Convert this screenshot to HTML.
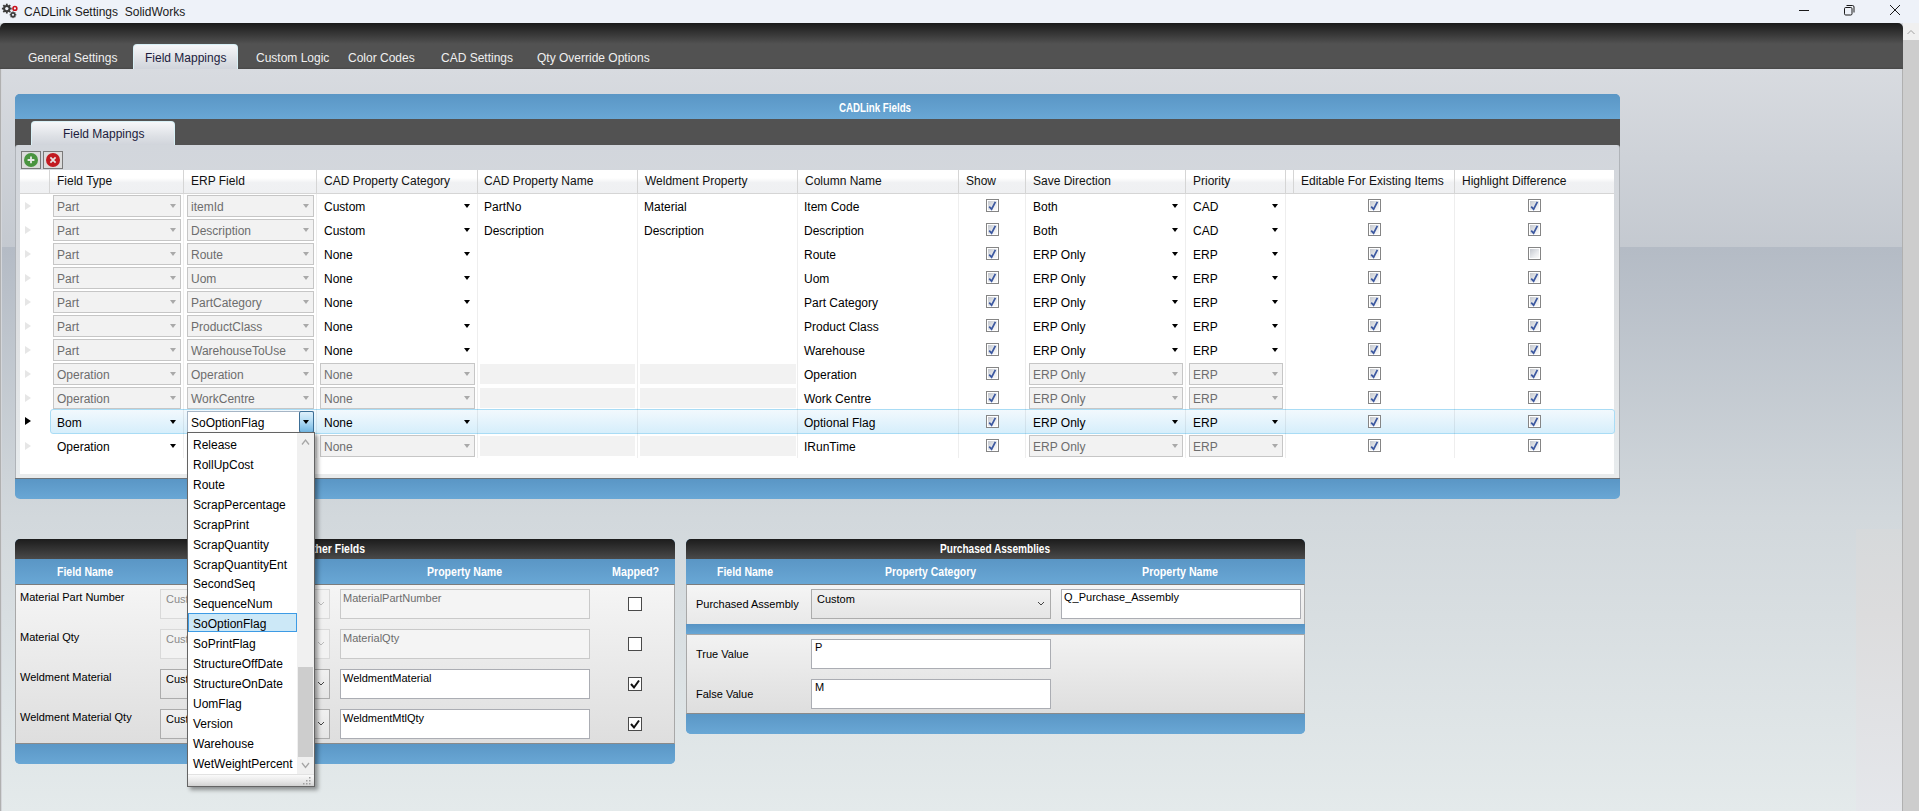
<!DOCTYPE html>
<html><head><meta charset="utf-8"><title>CADLink Settings</title>
<style>
*{box-sizing:border-box;margin:0;padding:0}
html,body{width:1919px;height:811px;overflow:hidden}
body{position:relative;font-family:"Liberation Sans", sans-serif;font-size:12px;color:#000;background:#d5d8dd}
.a{position:absolute}
.t{position:absolute;white-space:nowrap;line-height:1}
.cb{position:absolute;width:13px;height:13px;border:1px solid #858585;background:#fff}
.cbi{position:absolute;left:1px;top:1px;width:9px;height:9px;background:linear-gradient(135deg,#c3c7ce,#e9ebee 60%,#fbfbfb)}
.dcombo{position:absolute;height:22px;border:1px solid #c6c6c6;background:#f2f2f2}
.dbox{position:absolute;height:20px;background:#f2f2f2}
.arr{position:absolute;width:0;height:0;border-left:3.5px solid transparent;border-right:3.5px solid transparent;border-top:4px solid #000}
.darr{position:absolute;width:0;height:0;border-left:3.5px solid transparent;border-right:3.5px solid transparent;border-top:4px solid #a9a9a9}
.hb{color:#fff;font-weight:bold}
</style></head><body>

<div class="a" style="left:0;top:0;width:1919px;height:23px;background:#eef2f9"></div>
<svg class="a" style="left:1px;top:2px" width="20" height="18" viewBox="0 0 20 18">
<g fill="#3c3c3c">
<circle cx="5.8" cy="6.6" r="3.7"/>
<g transform="translate(5.8 6.6)">
<rect x="-0.9" y="-4.9" width="1.8" height="9.8"/>
<rect x="-0.9" y="-4.9" width="1.8" height="9.8" transform="rotate(45)"/>
<rect x="-0.9" y="-4.9" width="1.8" height="9.8" transform="rotate(90)"/>
<rect x="-0.9" y="-4.9" width="1.8" height="9.8" transform="rotate(135)"/>
</g>
<circle cx="12" cy="12.8" r="2.5"/>
<g transform="translate(12 12.8)">
<rect x="-0.7" y="-3.3" width="1.4" height="6.6"/>
<rect x="-0.7" y="-3.3" width="1.4" height="6.6" transform="rotate(45)"/>
<rect x="-0.7" y="-3.3" width="1.4" height="6.6" transform="rotate(90)"/>
<rect x="-0.7" y="-3.3" width="1.4" height="6.6" transform="rotate(135)"/>
</g>
</g>
<circle cx="5.8" cy="6.6" r="1.7" fill="#eef2f9"/>
<circle cx="12" cy="12.8" r="1.1" fill="#eef2f9"/>
<circle cx="13.9" cy="6.4" r="2.7" fill="#c8101a"/>
<circle cx="13.9" cy="6.4" r="1.1" fill="#eef2f9"/>
</svg>
<div class="t" style="left:24px;top:6px;font-size:12px;color:#1a1a1a">CADLink Settings&nbsp; SolidWorks</div>
<svg class="a" style="left:1790px;top:0" width="129" height="23" viewBox="0 0 129 23">
<line x1="9" y1="10.5" x2="19" y2="10.5" stroke="#1a1a1a" stroke-width="1"/>
<rect x="54.5" y="7.5" width="7.5" height="7.5" rx="1.2" fill="none" stroke="#1a1a1a" stroke-width="1"/>
<path d="M56.5 5.5 H62.5 A1.5 1.5 0 0 1 64 7 V12.5" fill="none" stroke="#1a1a1a" stroke-width="1"/>
<line x1="100" y1="5" x2="110" y2="15" stroke="#1a1a1a" stroke-width="1"/>
<line x1="110" y1="5" x2="100" y2="15" stroke="#1a1a1a" stroke-width="1"/>
</svg>
<div class="a" style="left:1903px;top:23px;width:16px;height:788px;background:#cdcdcd"></div>
<div class="a" style="left:1903px;top:23px;width:16px;height:17px;background:#f0f0f0"></div>
<svg class="a" style="left:1903px;top:23px" width="16" height="17"><path d="M4.5 11 L8 7.5 L11.5 11" fill="none" stroke="#a0a0a0" stroke-width="1"/></svg>
<div class="a" style="left:0;top:23px;width:1903px;height:46px;border-radius:5px 5px 0 0;background:linear-gradient(#1a1a1a 0px,#525252 21px,#525252 44px,#474747 46px)"></div>
<div class="t" style="left:28px;top:52px;color:#f0f0f0">General Settings</div>
<div class="t" style="left:256px;top:52px;color:#f0f0f0">Custom Logic</div>
<div class="t" style="left:348px;top:52px;color:#f0f0f0">Color Codes</div>
<div class="t" style="left:441px;top:52px;color:#f0f0f0">CAD Settings</div>
<div class="t" style="left:537px;top:52px;color:#f0f0f0">Qty Override Options</div>
<div class="a" style="left:133px;top:44px;width:105px;height:26px;border:1px solid #d8f0f6;border-bottom:none;border-radius:4px 4px 0 0;background:linear-gradient(#f6f7f9,#dde0e5 60%,#cfd3da)"></div>
<div class="t" style="left:145px;top:52px;color:#1c1c3c">Field Mappings</div>
<div class="a" style="left:0;top:69px;width:1903px;height:178px;background:linear-gradient(#d8dbe0,#c4c9d0)"></div>
<div class="a" style="left:0;top:247px;width:1903px;height:564px;background:linear-gradient(#b4bbc5 0%,#d2d8dc 48%,#e4eaeb 100%)"></div>
<div class="a" style="left:1856px;top:529px;width:46px;height:282px;background:linear-gradient(#d6d9db,#dcdcdd 30%,#e5e7eb)"></div>
<div class="a" style="left:0;top:69px;width:1px;height:742px;background:#b0b0b0"></div><div class="a" style="left:1px;top:69px;width:1px;height:742px;background:#d4d6da"></div>
<div class="a" style="left:1902px;top:69px;width:1px;height:742px;background:#b0b0b0"></div>
<div class="a" style="left:15px;top:94px;width:1605px;height:404px;border-radius:5px;background:linear-gradient(#5a96c5,#69a7d5)"></div>
<div class="a" style="left:15px;top:94px;width:1605px;height:25px;border-radius:5px 5px 0 0;background:linear-gradient(#5a96c5,#69a7d5)"></div>
<div class="t" style="left:839px;top:102px;font-size:12px;font-weight:bold;color:#fff;transform:scaleX(0.8121);transform-origin:0 0;">CADLink Fields</div>
<div class="a" style="left:15px;top:119px;width:1605px;height:29px;background:#525252"></div>
<div class="a" style="left:31px;top:121px;width:144px;height:25px;border:1px solid #d8f0f6;border-bottom:none;border-radius:4px 4px 0 0;background:linear-gradient(#f6f7f9,#dde0e5 60%,#cfd3da)"></div>
<div class="t" style="left:63px;top:128px;color:#1c1c3c">Field Mappings</div>
<div class="a" style="left:15px;top:145px;width:1605px;height:333px;border-radius:3px 3px 0 0;background:linear-gradient(#d2d6dc 0%,#d6d9dd 30%,#dfe1e3 60%,#e8ecee 100%);border-left:1px solid #b0b4b9;border-right:1px solid #b0b4b9"></div>
<div class="a" style="left:16px;top:474px;width:1603px;height:4px;background:#e9ebec"></div>
<div class="a" style="left:15px;top:478px;width:1605px;height:21px;border-radius:0 0 5px 5px;background:linear-gradient(#5a96c5,#69a7d5);border-top:1px solid #6e747a"></div>
<div class="a" style="left:21px;top:151px;width:20px;height:18px;border:1px solid #7a7a7a;background:#dcdcdc"></div>
<svg class="a" style="left:21px;top:151px" width="20" height="18"><circle cx="10" cy="9" r="7" fill="#4a9440"/><path d="M10 5.5 V12.3 M6.6 9 H13.4" stroke="#e9e9e9" stroke-width="1.8"/></svg>
<div class="a" style="left:43px;top:151px;width:20px;height:18px;border:1px solid #7a7a7a;background:#dcdcdc"></div>
<svg class="a" style="left:43px;top:151px" width="20" height="18"><circle cx="10" cy="9" r="7" fill="#c21a20"/><path d="M7.4 6.4 L12.6 11.6 M12.6 6.4 L7.4 11.6" stroke="#e6e6e6" stroke-width="1.7"/></svg>
<div class="a" style="left:20px;top:170px;width:1594px;height:304px;background:#fff"></div>
<div class="a" style="left:20px;top:170px;width:1594px;height:24px;background:linear-gradient(#ffffff 0%,#ffffff 35%,#f0f1f3 55%,#eff0f2 100%);border-bottom:1px solid #d5d5d5"></div>
<div class="a" style="left:49px;top:170px;width:1px;height:23px;background:#d5d5d5"></div>
<div class="a" style="left:183px;top:170px;width:1px;height:23px;background:#d5d5d5"></div>
<div class="a" style="left:316px;top:170px;width:1px;height:23px;background:#d5d5d5"></div>
<div class="a" style="left:477px;top:170px;width:1px;height:23px;background:#d5d5d5"></div>
<div class="a" style="left:637px;top:170px;width:1px;height:23px;background:#d5d5d5"></div>
<div class="a" style="left:797px;top:170px;width:1px;height:23px;background:#d5d5d5"></div>
<div class="a" style="left:958px;top:170px;width:1px;height:23px;background:#d5d5d5"></div>
<div class="a" style="left:1025px;top:170px;width:1px;height:23px;background:#d5d5d5"></div>
<div class="a" style="left:1185px;top:170px;width:1px;height:23px;background:#d5d5d5"></div>
<div class="a" style="left:1285px;top:170px;width:1px;height:23px;background:#d5d5d5"></div>
<div class="a" style="left:1293px;top:170px;width:1px;height:23px;background:#d5d5d5"></div>
<div class="a" style="left:1454px;top:170px;width:1px;height:23px;background:#d5d5d5"></div>
<div class="t" style="left:57px;top:175px;color:#111">Field Type</div>
<div class="t" style="left:191px;top:175px;color:#111">ERP Field</div>
<div class="t" style="left:324px;top:175px;color:#111">CAD Property Category</div>
<div class="t" style="left:484px;top:175px;color:#111">CAD Property Name</div>
<div class="t" style="left:645px;top:175px;color:#111">Weldment Property</div>
<div class="t" style="left:805px;top:175px;color:#111">Column Name</div>
<div class="t" style="left:966px;top:175px;color:#111">Show</div>
<div class="t" style="left:1033px;top:175px;color:#111">Save Direction</div>
<div class="t" style="left:1193px;top:175px;color:#111">Priority</div>
<div class="t" style="left:1301px;top:175px;color:#111">Editable For Existing Items</div>
<div class="t" style="left:1462px;top:175px;color:#111">Highlight Difference</div>
<div class="a" style="left:50px;top:409px;width:1565px;height:25px;border:1px solid #a9dcf5;border-radius:3px;background:linear-gradient(#f2f9fd,#d6eefb)"></div>
<div class="a" style="left:183px;top:194px;width:1px;height:264px;background:rgba(0,0,0,0.065)"></div>
<div class="a" style="left:316px;top:194px;width:1px;height:264px;background:rgba(0,0,0,0.065)"></div>
<div class="a" style="left:477px;top:194px;width:1px;height:264px;background:rgba(0,0,0,0.065)"></div>
<div class="a" style="left:637px;top:194px;width:1px;height:264px;background:rgba(0,0,0,0.065)"></div>
<div class="a" style="left:797px;top:194px;width:1px;height:264px;background:rgba(0,0,0,0.065)"></div>
<div class="a" style="left:958px;top:194px;width:1px;height:264px;background:rgba(0,0,0,0.065)"></div>
<div class="a" style="left:1025px;top:194px;width:1px;height:264px;background:rgba(0,0,0,0.065)"></div>
<div class="a" style="left:1185px;top:194px;width:1px;height:264px;background:rgba(0,0,0,0.065)"></div>
<div class="a" style="left:1285px;top:194px;width:1px;height:264px;background:rgba(0,0,0,0.065)"></div>
<div class="a" style="left:1454px;top:194px;width:1px;height:264px;background:rgba(0,0,0,0.065)"></div>
<div class="a" style="left:25px;top:202px;width:0;height:0;border-top:4.5px solid transparent;border-bottom:4.5px solid transparent;border-left:6px solid #e6e6e6"></div>
<div class="dcombo" style="left:53px;top:195px;width:128px"></div><div class="t" style="left:57px;top:201px;color:#6d6d6d">Part</div><div class="darr" style="left:170px;top:204px"></div>
<div class="dcombo" style="left:187px;top:195px;width:127px"></div><div class="t" style="left:191px;top:201px;color:#6d6d6d">itemId</div><div class="darr" style="left:303px;top:204px"></div>
<div class="t" style="left:324px;top:201px;color:#000">Custom</div><div class="arr" style="left:464px;top:204px"></div>
<div class="t" style="left:484px;top:201px">PartNo</div>
<div class="t" style="left:644px;top:201px">Material</div>
<div class="t" style="left:804px;top:201px">Item Code</div>
<div class="cb" style="left:986px;top:199px"><div class="cbi"></div><svg class="a" style="left:0;top:0" width="11" height="11"><path d="M2.2 6.6 L4.6 9.2 L8.4 1.8" fill="none" stroke="#3c58a0" stroke-width="1.7"/></svg></div>
<div class="t" style="left:1033px;top:201px;color:#000">Both</div><div class="arr" style="left:1172px;top:204px"></div>
<div class="t" style="left:1193px;top:201px;color:#000">CAD</div><div class="arr" style="left:1272px;top:204px"></div>
<div class="cb" style="left:1368px;top:199px"><div class="cbi"></div><svg class="a" style="left:0;top:0" width="11" height="11"><path d="M2.2 6.6 L4.6 9.2 L8.4 1.8" fill="none" stroke="#3c58a0" stroke-width="1.7"/></svg></div>
<div class="cb" style="left:1528px;top:199px"><div class="cbi"></div><svg class="a" style="left:0;top:0" width="11" height="11"><path d="M2.2 6.6 L4.6 9.2 L8.4 1.8" fill="none" stroke="#3c58a0" stroke-width="1.7"/></svg></div>
<div class="a" style="left:25px;top:226px;width:0;height:0;border-top:4.5px solid transparent;border-bottom:4.5px solid transparent;border-left:6px solid #e6e6e6"></div>
<div class="dcombo" style="left:53px;top:219px;width:128px"></div><div class="t" style="left:57px;top:225px;color:#6d6d6d">Part</div><div class="darr" style="left:170px;top:228px"></div>
<div class="dcombo" style="left:187px;top:219px;width:127px"></div><div class="t" style="left:191px;top:225px;color:#6d6d6d">Description</div><div class="darr" style="left:303px;top:228px"></div>
<div class="t" style="left:324px;top:225px;color:#000">Custom</div><div class="arr" style="left:464px;top:228px"></div>
<div class="t" style="left:484px;top:225px">Description</div>
<div class="t" style="left:644px;top:225px">Description</div>
<div class="t" style="left:804px;top:225px">Description</div>
<div class="cb" style="left:986px;top:223px"><div class="cbi"></div><svg class="a" style="left:0;top:0" width="11" height="11"><path d="M2.2 6.6 L4.6 9.2 L8.4 1.8" fill="none" stroke="#3c58a0" stroke-width="1.7"/></svg></div>
<div class="t" style="left:1033px;top:225px;color:#000">Both</div><div class="arr" style="left:1172px;top:228px"></div>
<div class="t" style="left:1193px;top:225px;color:#000">CAD</div><div class="arr" style="left:1272px;top:228px"></div>
<div class="cb" style="left:1368px;top:223px"><div class="cbi"></div><svg class="a" style="left:0;top:0" width="11" height="11"><path d="M2.2 6.6 L4.6 9.2 L8.4 1.8" fill="none" stroke="#3c58a0" stroke-width="1.7"/></svg></div>
<div class="cb" style="left:1528px;top:223px"><div class="cbi"></div><svg class="a" style="left:0;top:0" width="11" height="11"><path d="M2.2 6.6 L4.6 9.2 L8.4 1.8" fill="none" stroke="#3c58a0" stroke-width="1.7"/></svg></div>
<div class="a" style="left:25px;top:250px;width:0;height:0;border-top:4.5px solid transparent;border-bottom:4.5px solid transparent;border-left:6px solid #e6e6e6"></div>
<div class="dcombo" style="left:53px;top:243px;width:128px"></div><div class="t" style="left:57px;top:249px;color:#6d6d6d">Part</div><div class="darr" style="left:170px;top:252px"></div>
<div class="dcombo" style="left:187px;top:243px;width:127px"></div><div class="t" style="left:191px;top:249px;color:#6d6d6d">Route</div><div class="darr" style="left:303px;top:252px"></div>
<div class="t" style="left:324px;top:249px;color:#000">None</div><div class="arr" style="left:464px;top:252px"></div>
<div class="t" style="left:804px;top:249px">Route</div>
<div class="cb" style="left:986px;top:247px"><div class="cbi"></div><svg class="a" style="left:0;top:0" width="11" height="11"><path d="M2.2 6.6 L4.6 9.2 L8.4 1.8" fill="none" stroke="#3c58a0" stroke-width="1.7"/></svg></div>
<div class="t" style="left:1033px;top:249px;color:#000">ERP Only</div><div class="arr" style="left:1172px;top:252px"></div>
<div class="t" style="left:1193px;top:249px;color:#000">ERP</div><div class="arr" style="left:1272px;top:252px"></div>
<div class="cb" style="left:1368px;top:247px"><div class="cbi"></div><svg class="a" style="left:0;top:0" width="11" height="11"><path d="M2.2 6.6 L4.6 9.2 L8.4 1.8" fill="none" stroke="#3c58a0" stroke-width="1.7"/></svg></div>
<div class="cb" style="left:1528px;top:247px"><div class="cbi"></div></div>
<div class="a" style="left:25px;top:274px;width:0;height:0;border-top:4.5px solid transparent;border-bottom:4.5px solid transparent;border-left:6px solid #e6e6e6"></div>
<div class="dcombo" style="left:53px;top:267px;width:128px"></div><div class="t" style="left:57px;top:273px;color:#6d6d6d">Part</div><div class="darr" style="left:170px;top:276px"></div>
<div class="dcombo" style="left:187px;top:267px;width:127px"></div><div class="t" style="left:191px;top:273px;color:#6d6d6d">Uom</div><div class="darr" style="left:303px;top:276px"></div>
<div class="t" style="left:324px;top:273px;color:#000">None</div><div class="arr" style="left:464px;top:276px"></div>
<div class="t" style="left:804px;top:273px">Uom</div>
<div class="cb" style="left:986px;top:271px"><div class="cbi"></div><svg class="a" style="left:0;top:0" width="11" height="11"><path d="M2.2 6.6 L4.6 9.2 L8.4 1.8" fill="none" stroke="#3c58a0" stroke-width="1.7"/></svg></div>
<div class="t" style="left:1033px;top:273px;color:#000">ERP Only</div><div class="arr" style="left:1172px;top:276px"></div>
<div class="t" style="left:1193px;top:273px;color:#000">ERP</div><div class="arr" style="left:1272px;top:276px"></div>
<div class="cb" style="left:1368px;top:271px"><div class="cbi"></div><svg class="a" style="left:0;top:0" width="11" height="11"><path d="M2.2 6.6 L4.6 9.2 L8.4 1.8" fill="none" stroke="#3c58a0" stroke-width="1.7"/></svg></div>
<div class="cb" style="left:1528px;top:271px"><div class="cbi"></div><svg class="a" style="left:0;top:0" width="11" height="11"><path d="M2.2 6.6 L4.6 9.2 L8.4 1.8" fill="none" stroke="#3c58a0" stroke-width="1.7"/></svg></div>
<div class="a" style="left:25px;top:298px;width:0;height:0;border-top:4.5px solid transparent;border-bottom:4.5px solid transparent;border-left:6px solid #e6e6e6"></div>
<div class="dcombo" style="left:53px;top:291px;width:128px"></div><div class="t" style="left:57px;top:297px;color:#6d6d6d">Part</div><div class="darr" style="left:170px;top:300px"></div>
<div class="dcombo" style="left:187px;top:291px;width:127px"></div><div class="t" style="left:191px;top:297px;color:#6d6d6d">PartCategory</div><div class="darr" style="left:303px;top:300px"></div>
<div class="t" style="left:324px;top:297px;color:#000">None</div><div class="arr" style="left:464px;top:300px"></div>
<div class="t" style="left:804px;top:297px">Part Category</div>
<div class="cb" style="left:986px;top:295px"><div class="cbi"></div><svg class="a" style="left:0;top:0" width="11" height="11"><path d="M2.2 6.6 L4.6 9.2 L8.4 1.8" fill="none" stroke="#3c58a0" stroke-width="1.7"/></svg></div>
<div class="t" style="left:1033px;top:297px;color:#000">ERP Only</div><div class="arr" style="left:1172px;top:300px"></div>
<div class="t" style="left:1193px;top:297px;color:#000">ERP</div><div class="arr" style="left:1272px;top:300px"></div>
<div class="cb" style="left:1368px;top:295px"><div class="cbi"></div><svg class="a" style="left:0;top:0" width="11" height="11"><path d="M2.2 6.6 L4.6 9.2 L8.4 1.8" fill="none" stroke="#3c58a0" stroke-width="1.7"/></svg></div>
<div class="cb" style="left:1528px;top:295px"><div class="cbi"></div><svg class="a" style="left:0;top:0" width="11" height="11"><path d="M2.2 6.6 L4.6 9.2 L8.4 1.8" fill="none" stroke="#3c58a0" stroke-width="1.7"/></svg></div>
<div class="a" style="left:25px;top:322px;width:0;height:0;border-top:4.5px solid transparent;border-bottom:4.5px solid transparent;border-left:6px solid #e6e6e6"></div>
<div class="dcombo" style="left:53px;top:315px;width:128px"></div><div class="t" style="left:57px;top:321px;color:#6d6d6d">Part</div><div class="darr" style="left:170px;top:324px"></div>
<div class="dcombo" style="left:187px;top:315px;width:127px"></div><div class="t" style="left:191px;top:321px;color:#6d6d6d">ProductClass</div><div class="darr" style="left:303px;top:324px"></div>
<div class="t" style="left:324px;top:321px;color:#000">None</div><div class="arr" style="left:464px;top:324px"></div>
<div class="t" style="left:804px;top:321px">Product Class</div>
<div class="cb" style="left:986px;top:319px"><div class="cbi"></div><svg class="a" style="left:0;top:0" width="11" height="11"><path d="M2.2 6.6 L4.6 9.2 L8.4 1.8" fill="none" stroke="#3c58a0" stroke-width="1.7"/></svg></div>
<div class="t" style="left:1033px;top:321px;color:#000">ERP Only</div><div class="arr" style="left:1172px;top:324px"></div>
<div class="t" style="left:1193px;top:321px;color:#000">ERP</div><div class="arr" style="left:1272px;top:324px"></div>
<div class="cb" style="left:1368px;top:319px"><div class="cbi"></div><svg class="a" style="left:0;top:0" width="11" height="11"><path d="M2.2 6.6 L4.6 9.2 L8.4 1.8" fill="none" stroke="#3c58a0" stroke-width="1.7"/></svg></div>
<div class="cb" style="left:1528px;top:319px"><div class="cbi"></div><svg class="a" style="left:0;top:0" width="11" height="11"><path d="M2.2 6.6 L4.6 9.2 L8.4 1.8" fill="none" stroke="#3c58a0" stroke-width="1.7"/></svg></div>
<div class="a" style="left:25px;top:346px;width:0;height:0;border-top:4.5px solid transparent;border-bottom:4.5px solid transparent;border-left:6px solid #e6e6e6"></div>
<div class="dcombo" style="left:53px;top:339px;width:128px"></div><div class="t" style="left:57px;top:345px;color:#6d6d6d">Part</div><div class="darr" style="left:170px;top:348px"></div>
<div class="dcombo" style="left:187px;top:339px;width:127px"></div><div class="t" style="left:191px;top:345px;color:#6d6d6d">WarehouseToUse</div><div class="darr" style="left:303px;top:348px"></div>
<div class="t" style="left:324px;top:345px;color:#000">None</div><div class="arr" style="left:464px;top:348px"></div>
<div class="t" style="left:804px;top:345px">Warehouse</div>
<div class="cb" style="left:986px;top:343px"><div class="cbi"></div><svg class="a" style="left:0;top:0" width="11" height="11"><path d="M2.2 6.6 L4.6 9.2 L8.4 1.8" fill="none" stroke="#3c58a0" stroke-width="1.7"/></svg></div>
<div class="t" style="left:1033px;top:345px;color:#000">ERP Only</div><div class="arr" style="left:1172px;top:348px"></div>
<div class="t" style="left:1193px;top:345px;color:#000">ERP</div><div class="arr" style="left:1272px;top:348px"></div>
<div class="cb" style="left:1368px;top:343px"><div class="cbi"></div><svg class="a" style="left:0;top:0" width="11" height="11"><path d="M2.2 6.6 L4.6 9.2 L8.4 1.8" fill="none" stroke="#3c58a0" stroke-width="1.7"/></svg></div>
<div class="cb" style="left:1528px;top:343px"><div class="cbi"></div><svg class="a" style="left:0;top:0" width="11" height="11"><path d="M2.2 6.6 L4.6 9.2 L8.4 1.8" fill="none" stroke="#3c58a0" stroke-width="1.7"/></svg></div>
<div class="a" style="left:25px;top:370px;width:0;height:0;border-top:4.5px solid transparent;border-bottom:4.5px solid transparent;border-left:6px solid #e6e6e6"></div>
<div class="dcombo" style="left:53px;top:363px;width:128px"></div><div class="t" style="left:57px;top:369px;color:#6d6d6d">Operation</div><div class="darr" style="left:170px;top:372px"></div>
<div class="dcombo" style="left:187px;top:363px;width:127px"></div><div class="t" style="left:191px;top:369px;color:#6d6d6d">Operation</div><div class="darr" style="left:303px;top:372px"></div>
<div class="dcombo" style="left:320px;top:363px;width:155px"></div><div class="t" style="left:324px;top:369px;color:#6d6d6d">None</div><div class="darr" style="left:464px;top:372px"></div>
<div class="dbox" style="left:480px;top:364px;width:155px"></div>
<div class="dbox" style="left:640px;top:364px;width:156px"></div>
<div class="t" style="left:804px;top:369px">Operation</div>
<div class="cb" style="left:986px;top:367px"><div class="cbi"></div><svg class="a" style="left:0;top:0" width="11" height="11"><path d="M2.2 6.6 L4.6 9.2 L8.4 1.8" fill="none" stroke="#3c58a0" stroke-width="1.7"/></svg></div>
<div class="dcombo" style="left:1029px;top:363px;width:154px"></div><div class="t" style="left:1033px;top:369px;color:#6d6d6d">ERP Only</div><div class="darr" style="left:1172px;top:372px"></div>
<div class="dcombo" style="left:1189px;top:363px;width:94px"></div><div class="t" style="left:1193px;top:369px;color:#6d6d6d">ERP</div><div class="darr" style="left:1272px;top:372px"></div>
<div class="cb" style="left:1368px;top:367px"><div class="cbi"></div><svg class="a" style="left:0;top:0" width="11" height="11"><path d="M2.2 6.6 L4.6 9.2 L8.4 1.8" fill="none" stroke="#3c58a0" stroke-width="1.7"/></svg></div>
<div class="cb" style="left:1528px;top:367px"><div class="cbi"></div><svg class="a" style="left:0;top:0" width="11" height="11"><path d="M2.2 6.6 L4.6 9.2 L8.4 1.8" fill="none" stroke="#3c58a0" stroke-width="1.7"/></svg></div>
<div class="a" style="left:25px;top:394px;width:0;height:0;border-top:4.5px solid transparent;border-bottom:4.5px solid transparent;border-left:6px solid #e6e6e6"></div>
<div class="dcombo" style="left:53px;top:387px;width:128px"></div><div class="t" style="left:57px;top:393px;color:#6d6d6d">Operation</div><div class="darr" style="left:170px;top:396px"></div>
<div class="dcombo" style="left:187px;top:387px;width:127px"></div><div class="t" style="left:191px;top:393px;color:#6d6d6d">WorkCentre</div><div class="darr" style="left:303px;top:396px"></div>
<div class="dcombo" style="left:320px;top:387px;width:155px"></div><div class="t" style="left:324px;top:393px;color:#6d6d6d">None</div><div class="darr" style="left:464px;top:396px"></div>
<div class="dbox" style="left:480px;top:388px;width:155px"></div>
<div class="dbox" style="left:640px;top:388px;width:156px"></div>
<div class="t" style="left:804px;top:393px">Work Centre</div>
<div class="cb" style="left:986px;top:391px"><div class="cbi"></div><svg class="a" style="left:0;top:0" width="11" height="11"><path d="M2.2 6.6 L4.6 9.2 L8.4 1.8" fill="none" stroke="#3c58a0" stroke-width="1.7"/></svg></div>
<div class="dcombo" style="left:1029px;top:387px;width:154px"></div><div class="t" style="left:1033px;top:393px;color:#6d6d6d">ERP Only</div><div class="darr" style="left:1172px;top:396px"></div>
<div class="dcombo" style="left:1189px;top:387px;width:94px"></div><div class="t" style="left:1193px;top:393px;color:#6d6d6d">ERP</div><div class="darr" style="left:1272px;top:396px"></div>
<div class="cb" style="left:1368px;top:391px"><div class="cbi"></div><svg class="a" style="left:0;top:0" width="11" height="11"><path d="M2.2 6.6 L4.6 9.2 L8.4 1.8" fill="none" stroke="#3c58a0" stroke-width="1.7"/></svg></div>
<div class="cb" style="left:1528px;top:391px"><div class="cbi"></div><svg class="a" style="left:0;top:0" width="11" height="11"><path d="M2.2 6.6 L4.6 9.2 L8.4 1.8" fill="none" stroke="#3c58a0" stroke-width="1.7"/></svg></div>
<div class="a" style="left:25px;top:417px;width:0;height:0;border-top:4.5px solid transparent;border-bottom:4.5px solid transparent;border-left:6px solid #000"></div>
<div class="t" style="left:57px;top:417px;color:#000">Bom</div><div class="arr" style="left:170px;top:420px"></div>
<div class="a" style="left:187px;top:411px;width:127px;height:22px;border:1px solid #a6b5c5;background:#fff"></div>
<div class="a" style="left:299px;top:411px;width:15px;height:22px;border:1px solid #3c6e96;border-radius:2px;background:linear-gradient(#dff0fb,#b4dcf4 45%,#72b6e2)"></div>
<div class="arr" style="left:303px;top:420px"></div>
<div class="t" style="left:191px;top:417px;color:#000">SoOptionFlag</div>
<div class="t" style="left:324px;top:417px;color:#000">None</div><div class="arr" style="left:464px;top:420px"></div>
<div class="t" style="left:804px;top:417px">Optional Flag</div>
<div class="cb" style="left:986px;top:415px"><div class="cbi"></div><svg class="a" style="left:0;top:0" width="11" height="11"><path d="M2.2 6.6 L4.6 9.2 L8.4 1.8" fill="none" stroke="#3c58a0" stroke-width="1.7"/></svg></div>
<div class="t" style="left:1033px;top:417px;color:#000">ERP Only</div><div class="arr" style="left:1172px;top:420px"></div>
<div class="t" style="left:1193px;top:417px;color:#000">ERP</div><div class="arr" style="left:1272px;top:420px"></div>
<div class="cb" style="left:1368px;top:415px"><div class="cbi"></div><svg class="a" style="left:0;top:0" width="11" height="11"><path d="M2.2 6.6 L4.6 9.2 L8.4 1.8" fill="none" stroke="#3c58a0" stroke-width="1.7"/></svg></div>
<div class="cb" style="left:1528px;top:415px"><div class="cbi"></div><svg class="a" style="left:0;top:0" width="11" height="11"><path d="M2.2 6.6 L4.6 9.2 L8.4 1.8" fill="none" stroke="#3c58a0" stroke-width="1.7"/></svg></div>
<div class="a" style="left:25px;top:442px;width:0;height:0;border-top:4.5px solid transparent;border-bottom:4.5px solid transparent;border-left:6px solid #e6e6e6"></div>
<div class="t" style="left:57px;top:441px;color:#000">Operation</div><div class="arr" style="left:170px;top:444px"></div>
<div class="dcombo" style="left:320px;top:435px;width:155px"></div><div class="t" style="left:324px;top:441px;color:#6d6d6d">None</div><div class="darr" style="left:464px;top:444px"></div>
<div class="dbox" style="left:480px;top:436px;width:155px"></div>
<div class="dbox" style="left:640px;top:436px;width:156px"></div>
<div class="t" style="left:804px;top:441px">IRunTime</div>
<div class="cb" style="left:986px;top:439px"><div class="cbi"></div><svg class="a" style="left:0;top:0" width="11" height="11"><path d="M2.2 6.6 L4.6 9.2 L8.4 1.8" fill="none" stroke="#3c58a0" stroke-width="1.7"/></svg></div>
<div class="dcombo" style="left:1029px;top:435px;width:154px"></div><div class="t" style="left:1033px;top:441px;color:#6d6d6d">ERP Only</div><div class="darr" style="left:1172px;top:444px"></div>
<div class="dcombo" style="left:1189px;top:435px;width:94px"></div><div class="t" style="left:1193px;top:441px;color:#6d6d6d">ERP</div><div class="darr" style="left:1272px;top:444px"></div>
<div class="cb" style="left:1368px;top:439px"><div class="cbi"></div><svg class="a" style="left:0;top:0" width="11" height="11"><path d="M2.2 6.6 L4.6 9.2 L8.4 1.8" fill="none" stroke="#3c58a0" stroke-width="1.7"/></svg></div>
<div class="cb" style="left:1528px;top:439px"><div class="cbi"></div><svg class="a" style="left:0;top:0" width="11" height="11"><path d="M2.2 6.6 L4.6 9.2 L8.4 1.8" fill="none" stroke="#3c58a0" stroke-width="1.7"/></svg></div>
<div class="a" style="left:15px;top:539px;width:660px;height:225px;border-radius:5px;background:linear-gradient(#5a96c5,#69a7d5)"></div>
<div class="a" style="left:15px;top:539px;width:660px;height:20px;border-radius:5px 5px 0 0;background:linear-gradient(#1c1c1c,#4a4a4a)"></div>
<div class="a" style="left:15px;top:559px;width:660px;height:25px;background:linear-gradient(#5a96c5,#69a7d5)"></div>
<div class="a" style="left:15px;top:743px;width:660px;height:21px;border-radius:0 0 5px 5px;background:linear-gradient(#5a96c5,#69a7d5)"></div>
<div class="a" style="left:15px;top:584px;width:660px;height:160px;background:linear-gradient(#f5f5f5,#dedede);border:1px solid #a8a8a8;border-top:1px solid #7c7c7c;border-bottom:1px solid #8a8a8a"></div>
<div class="t" style="left:304px;top:543px;font-size:12px;font-weight:bold;color:#fff;transform:scaleX(0.8716);transform-origin:0 0;">Other Fields</div>
<div class="t" style="left:57px;top:566px;font-size:12px;font-weight:bold;color:#fff;transform:scaleX(0.8750);transform-origin:0 0;">Field Name</div>
<div class="t" style="left:427px;top:566px;font-size:12px;font-weight:bold;color:#fff;transform:scaleX(0.8786);transform-origin:0 0;">Property Name</div>
<div class="t" style="left:612px;top:566px;font-size:12px;font-weight:bold;color:#fff;transform:scaleX(0.8926);transform-origin:0 0;">Mapped?</div>
<div class="t" style="left:20px;top:592px;font-size:11px">Material Part Number</div>
<div class="a" style="left:160px;top:589px;width:170px;height:30px;border:1px solid #d9d9d9;background:#f2f2f2"></div>
<div class="t" style="left:166px;top:594px;font-size:11px;color:#8a8a8a">Custom</div>
<svg class="a" style="left:317px;top:601px" width="8" height="5"><path d="M1 1 L4 4 L7 1" fill="none" stroke="#bbb" stroke-width="1"/></svg>
<div class="a" style="left:340px;top:589px;width:250px;height:30px;border:1px solid #c9c9c9;background:#f4f4f4"></div>
<div class="t" style="left:343px;top:593px;font-size:11px;color:#6d6d6d">MaterialPartNumber</div>
<div class="a" style="left:628px;top:597px;width:14px;height:14px;border:1px solid #4a4a4a;background:#fff"></div>
<div class="t" style="left:20px;top:632px;font-size:11px">Material Qty</div>
<div class="a" style="left:160px;top:629px;width:170px;height:30px;border:1px solid #d9d9d9;background:#f2f2f2"></div>
<div class="t" style="left:166px;top:634px;font-size:11px;color:#8a8a8a">Custom</div>
<svg class="a" style="left:317px;top:641px" width="8" height="5"><path d="M1 1 L4 4 L7 1" fill="none" stroke="#bbb" stroke-width="1"/></svg>
<div class="a" style="left:340px;top:629px;width:250px;height:30px;border:1px solid #c9c9c9;background:#f4f4f4"></div>
<div class="t" style="left:343px;top:633px;font-size:11px;color:#6d6d6d">MaterialQty</div>
<div class="a" style="left:628px;top:637px;width:14px;height:14px;border:1px solid #4a4a4a;background:#fff"></div>
<div class="t" style="left:20px;top:672px;font-size:11px">Weldment Material</div>
<div class="a" style="left:160px;top:669px;width:170px;height:30px;border:1px solid #acacac;background:linear-gradient(#f0f0f0,#e5e5e5)"></div>
<div class="t" style="left:166px;top:674px;font-size:11px">Custom</div>
<svg class="a" style="left:317px;top:681px" width="8" height="5"><path d="M1 1 L4 4 L7 1" fill="none" stroke="#444" stroke-width="1"/></svg>
<div class="a" style="left:340px;top:669px;width:250px;height:30px;border:1px solid #abadb3;background:#fff"></div>
<div class="t" style="left:343px;top:673px;font-size:11px">WeldmentMaterial</div>
<div class="a" style="left:628px;top:677px;width:14px;height:14px;border:1px solid #4a4a4a;background:#fff"></div>
<svg class="a" style="left:628px;top:677px" width="14" height="14"><path d="M3 7 L6 10.5 L11 3.5" fill="none" stroke="#111" stroke-width="2"/></svg>
<div class="t" style="left:20px;top:712px;font-size:11px">Weldment Material Qty</div>
<div class="a" style="left:160px;top:709px;width:170px;height:30px;border:1px solid #acacac;background:linear-gradient(#f0f0f0,#e5e5e5)"></div>
<div class="t" style="left:166px;top:714px;font-size:11px">Custom</div>
<svg class="a" style="left:317px;top:721px" width="8" height="5"><path d="M1 1 L4 4 L7 1" fill="none" stroke="#444" stroke-width="1"/></svg>
<div class="a" style="left:340px;top:709px;width:250px;height:30px;border:1px solid #abadb3;background:#fff"></div>
<div class="t" style="left:343px;top:713px;font-size:11px">WeldmentMtlQty</div>
<div class="a" style="left:628px;top:717px;width:14px;height:14px;border:1px solid #4a4a4a;background:#fff"></div>
<svg class="a" style="left:628px;top:717px" width="14" height="14"><path d="M3 7 L6 10.5 L11 3.5" fill="none" stroke="#111" stroke-width="2"/></svg>
<div class="a" style="left:686px;top:539px;width:619px;height:195px;border-radius:5px;background:linear-gradient(#5a96c5,#69a7d5)"></div>
<div class="a" style="left:686px;top:539px;width:619px;height:20px;border-radius:5px 5px 0 0;background:linear-gradient(#1c1c1c,#4a4a4a)"></div>
<div class="a" style="left:686px;top:559px;width:619px;height:25px;background:linear-gradient(#5a96c5,#69a7d5)"></div>
<div class="a" style="left:686px;top:713px;width:619px;height:21px;border-radius:0 0 5px 5px;background:linear-gradient(#5a96c5,#69a7d5)"></div>
<div class="a" style="left:686px;top:584px;width:619px;height:40px;background:linear-gradient(#f5f5f5,#e9e9e9);border:1px solid #a8a8a8;border-top:1px solid #7c7c7c;border-bottom:none"></div>
<div class="a" style="left:686px;top:624px;width:619px;height:10px;background:linear-gradient(#5793c3,#68a6d4)"></div>
<div class="a" style="left:686px;top:634px;width:619px;height:80px;background:linear-gradient(#f2f2f2,#dedede);border:1px solid #a8a8a8;border-bottom:1px solid #8a8a8a"></div>
<div class="t" style="left:940px;top:543px;font-size:12px;font-weight:bold;color:#fff;transform:scaleX(0.8402);transform-origin:0 0;">Purchased Assemblies</div>
<div class="t" style="left:717px;top:566px;font-size:12px;font-weight:bold;color:#fff;transform:scaleX(0.8750);transform-origin:0 0;">Field Name</div>
<div class="t" style="left:885px;top:566px;font-size:12px;font-weight:bold;color:#fff;transform:scaleX(0.8693);transform-origin:0 0;">Property Category</div>
<div class="t" style="left:1142px;top:566px;font-size:12px;font-weight:bold;color:#fff;transform:scaleX(0.8904);transform-origin:0 0;">Property Name</div>
<div class="t" style="left:696px;top:599px;font-size:11px">Purchased Assembly</div>
<div class="a" style="left:811px;top:589px;width:240px;height:30px;border:1px solid #acacac;background:linear-gradient(#f0f0f0,#e5e5e5)"></div>
<div class="t" style="left:817px;top:594px;font-size:11px">Custom</div>
<svg class="a" style="left:1037px;top:601px" width="8" height="5"><path d="M1 1 L4 4 L7 1" fill="none" stroke="#444" stroke-width="1"/></svg>
<div class="a" style="left:1061px;top:589px;width:240px;height:30px;border:1px solid #abadb3;background:#fff"></div>
<div class="t" style="left:1064px;top:592px;font-size:11px">Q_Purchase_Assembly</div>
<div class="t" style="left:696px;top:649px;font-size:11px">True Value</div>
<div class="a" style="left:811px;top:639px;width:240px;height:30px;border:1px solid #abadb3;background:#fff"></div>
<div class="t" style="left:815px;top:642px;font-size:11px">P</div>
<div class="t" style="left:696px;top:689px;font-size:11px">False Value</div>
<div class="a" style="left:811px;top:679px;width:240px;height:30px;border:1px solid #abadb3;background:#fff"></div>
<div class="t" style="left:815px;top:682px;font-size:11px">M</div>
<div class="a" style="left:187px;top:432px;width:128px;height:355px;border:1px solid #646464;background:#fff;box-shadow:3px 3px 4px rgba(0,0,0,0.38)"></div>
<div class="a" style="left:297px;top:433px;width:17px;height:341px;background:#f0f0f0"></div>
<div class="a" style="left:298px;top:667px;width:15px;height:90px;background:#cdcdcd"></div>
<svg class="a" style="left:297px;top:433px" width="17" height="17"><path d="M5 11.5 L8.5 7 L12 11.5" fill="none" stroke="#a6a6a6" stroke-width="1.3"/></svg>
<svg class="a" style="left:297px;top:757px" width="17" height="17"><path d="M5 6 L8.5 10.5 L12 6" fill="none" stroke="#a6a6a6" stroke-width="1.3"/></svg>
<div class="a" style="left:188px;top:774px;width:126px;height:12px;background:linear-gradient(#fafafa,#e6e6e6 60%,#d2d2d2);border-top:1px solid #e2e2e2"></div>
<svg class="a" style="left:302px;top:776px" width="10" height="9"><g fill="#a0a0a0"><rect x="7" y="1" width="1.5" height="1.5"/><rect x="4" y="4" width="1.5" height="1.5"/><rect x="7" y="4" width="1.5" height="1.5"/><rect x="1" y="7" width="1.5" height="1.5"/><rect x="4" y="7" width="1.5" height="1.5"/><rect x="7" y="7" width="1.5" height="1.5"/></g></svg>
<div class="t" style="left:193px;top:439.00px">Release</div>
<div class="t" style="left:193px;top:458.92px">RollUpCost</div>
<div class="t" style="left:193px;top:478.84px">Route</div>
<div class="t" style="left:193px;top:498.76px">ScrapPercentage</div>
<div class="t" style="left:193px;top:518.68px">ScrapPrint</div>
<div class="t" style="left:193px;top:538.60px">ScrapQuantity</div>
<div class="t" style="left:193px;top:558.52px">ScrapQuantityEnt</div>
<div class="t" style="left:193px;top:578.44px">SecondSeq</div>
<div class="t" style="left:193px;top:598.36px">SequenceNum</div>
<div class="a" style="left:188px;top:612.78px;width:109px;height:19.5px;border:1px solid #3d9be5;background:#cce8f7"></div>
<div class="t" style="left:193px;top:618.28px">SoOptionFlag</div>
<div class="t" style="left:193px;top:638.20px">SoPrintFlag</div>
<div class="t" style="left:193px;top:658.12px">StructureOffDate</div>
<div class="t" style="left:193px;top:678.04px">StructureOnDate</div>
<div class="t" style="left:193px;top:697.96px">UomFlag</div>
<div class="t" style="left:193px;top:717.88px">Version</div>
<div class="t" style="left:193px;top:737.80px">Warehouse</div>
<div class="t" style="left:193px;top:757.72px">WetWeightPercent</div>
</body></html>
